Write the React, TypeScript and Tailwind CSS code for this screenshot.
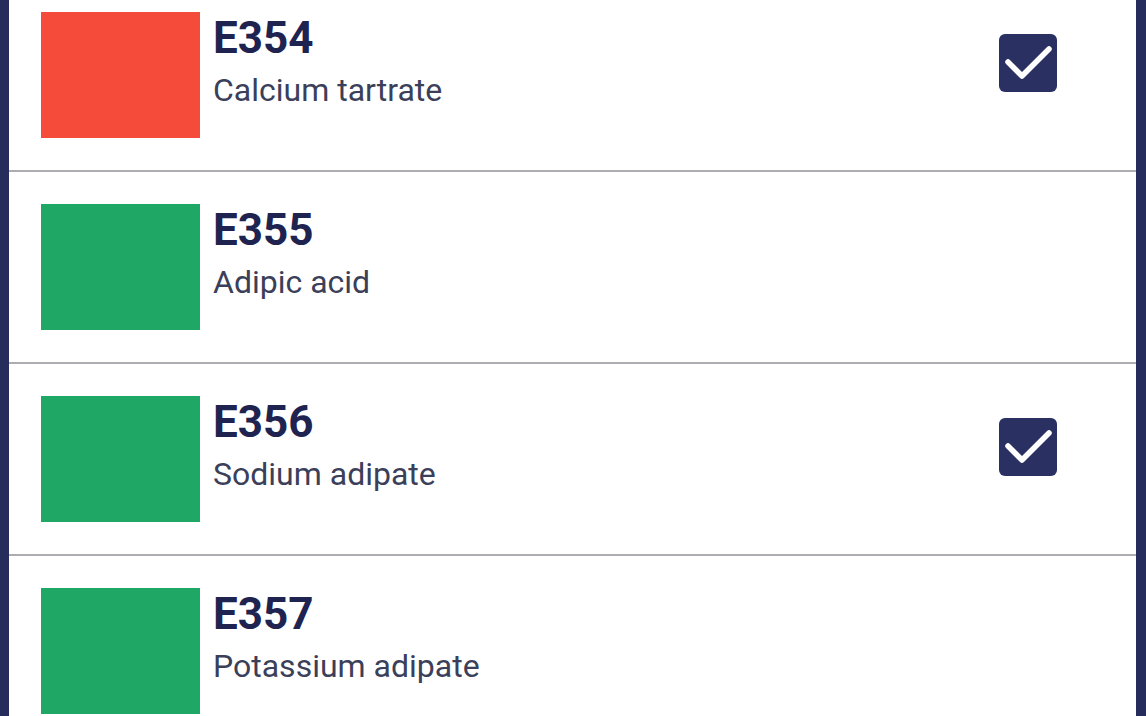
type Additive = { code: string; name: string; color: string; checked: boolean };

const items: Additive[] = [
  { code: "E354", name: "Calcium tartrate", color: "bg-[#f44b3a]", checked: true },
  { code: "E355", name: "Adipic acid", color: "bg-[#1fa865]", checked: false },
  { code: "E356", name: "Sodium adipate", color: "bg-[#1fa865]", checked: true },
  { code: "E357", name: "Potassium adipate", color: "bg-[#1fa865]", checked: false },
];

export default function App() {
  return (
    <div className="h-[716px] w-[1146px] overflow-hidden border-l-[9px] border-r-[10px] border-[#262d5c] bg-white font-['Roboto',sans-serif]">
      <div className="-mt-[20px]">
        {items.map((item) => (
          <AdditiveRow key={item.code} item={item} />
        ))}
      </div>
    </div>
  );
}

function AdditiveRow({ item }: { item: Additive }) {
  return (
    <div className="flex h-[192px] items-start border-b-2 border-[#adadb2] pl-[32px] pr-[79px] pt-[32px]">
      <div className={`h-[126px] w-[159px] shrink-0 ${item.color}`} />
      <div className="ml-[13px] flex-1">
        <p className="text-[44px] font-bold leading-[52px] text-[#1e2350]">{item.code}</p>
        <p className="mt-[6px] text-[32px] leading-[40px] text-[#3b3f5a]">{item.name}</p>
      </div>
      {item.checked ? <CheckedBox /> : null}
    </div>
  );
}

function CheckedBox() {
  return (
    <div className="mt-[22px] h-[58px] w-[58px] rounded-[6px] bg-[#2a3162]">
      <svg viewBox="0 0 58 58" className="h-full w-full">
        <path
          d="M9 28 L23 42 L50 15"
          fill="none"
          stroke="white"
          strokeWidth={5.5}
          strokeLinecap="round"
          strokeLinejoin="round"
        />
      </svg>
    </div>
  );
}
